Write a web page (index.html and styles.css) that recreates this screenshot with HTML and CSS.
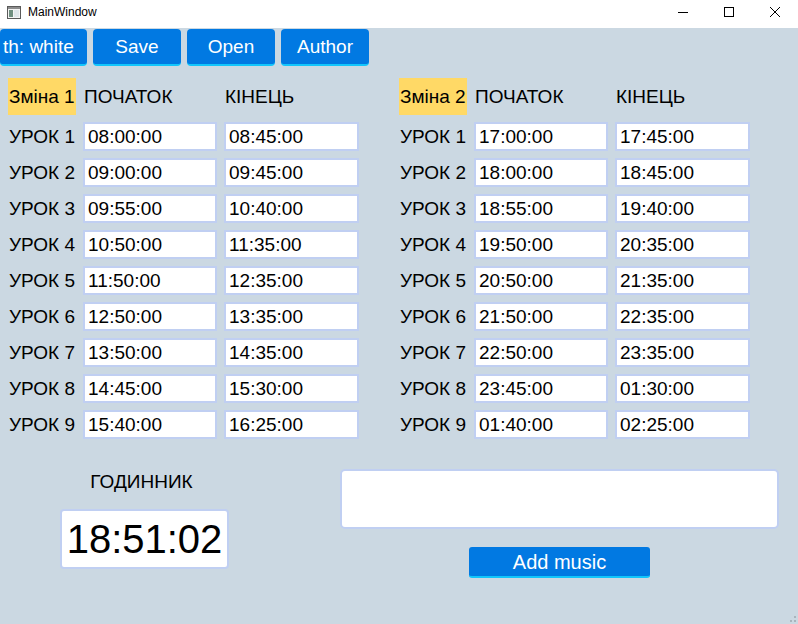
FILE: index.html
```html
<!DOCTYPE html>
<html lang="uk">
<head>
<meta charset="utf-8">
<title>MainWindow</title>
<link rel="stylesheet" href="styles.css">
</head>
<body>
<div class="titlebar">
  <svg class="appicon" width="14" height="13" viewBox="0 0 14 13">
    <rect x="0.5" y="0.5" width="13" height="12" fill="#f4f4f4" stroke="#5a5a5a"/>
    <rect x="1" y="1" width="12" height="2" fill="#8c8c8c"/>
    <rect x="2" y="4" width="4" height="7" fill="#6f8f80"/>
    <rect x="7" y="4" width="5" height="7" fill="#dfe6ea"/>
  </svg>
  <span class="title">MainWindow</span>
  <div class="controls">
    <span class="ctl"><svg width="12" height="12" viewBox="0 0 12 12"><path d="M1 6.5h10" stroke="#000" stroke-width="1"/></svg></span>
    <span class="ctl"><svg width="12" height="12" viewBox="0 0 12 12"><rect x="1.5" y="1.5" width="9" height="9" fill="none" stroke="#000" stroke-width="1"/></svg></span>
    <span class="ctl"><svg width="12" height="12" viewBox="0 0 12 12"><path d="M1 1L11 11M11 1L1 11" stroke="#000" stroke-width="1"/></svg></span>
  </div>
</div>
<main class="window">
  <div class="toolbar">
    <button class="btn first"><span>th: white</span></button>
    <button class="btn">Save</button>
    <button class="btn">Open</button>
    <button class="btn">Author</button>
  </div>

  <div class="tables">
    <div class="shift">
      <div class="shiftname">Зміна 1</div><div class="head">ПОЧАТОК</div><div class="head">КІНЕЦЬ</div>
      <div class="lbl">УРОК 1</div><div class="field">08:00:00</div><div class="field">08:45:00</div>
      <div class="lbl">УРОК 2</div><div class="field">09:00:00</div><div class="field">09:45:00</div>
      <div class="lbl">УРОК 3</div><div class="field">09:55:00</div><div class="field">10:40:00</div>
      <div class="lbl">УРОК 4</div><div class="field">10:50:00</div><div class="field">11:35:00</div>
      <div class="lbl">УРОК 5</div><div class="field">11:50:00</div><div class="field">12:35:00</div>
      <div class="lbl">УРОК 6</div><div class="field">12:50:00</div><div class="field">13:35:00</div>
      <div class="lbl">УРОК 7</div><div class="field">13:50:00</div><div class="field">14:35:00</div>
      <div class="lbl">УРОК 8</div><div class="field">14:45:00</div><div class="field">15:30:00</div>
      <div class="lbl">УРОК 9</div><div class="field">15:40:00</div><div class="field">16:25:00</div>
    </div>
    <div class="shift">
      <div class="shiftname">Зміна 2</div><div class="head">ПОЧАТОК</div><div class="head">КІНЕЦЬ</div>
      <div class="lbl">УРОК 1</div><div class="field">17:00:00</div><div class="field">17:45:00</div>
      <div class="lbl">УРОК 2</div><div class="field">18:00:00</div><div class="field">18:45:00</div>
      <div class="lbl">УРОК 3</div><div class="field">18:55:00</div><div class="field">19:40:00</div>
      <div class="lbl">УРОК 4</div><div class="field">19:50:00</div><div class="field">20:35:00</div>
      <div class="lbl">УРОК 5</div><div class="field">20:50:00</div><div class="field">21:35:00</div>
      <div class="lbl">УРОК 6</div><div class="field">21:50:00</div><div class="field">22:35:00</div>
      <div class="lbl">УРОК 7</div><div class="field">22:50:00</div><div class="field">23:35:00</div>
      <div class="lbl">УРОК 8</div><div class="field">23:45:00</div><div class="field">01:30:00</div>
      <div class="lbl">УРОК 9</div><div class="field">01:40:00</div><div class="field">02:25:00</div>
    </div>
  </div>

  <div class="bottom">
    <div class="clockcol">
      <div class="clocklabel">ГОДИННИК</div>
      <div class="clock">18:51:02</div>
    </div>
    <div class="musiccol">
      <div class="textbox"></div>
      <button class="btn music">Add music</button>
    </div>
  </div>
  <svg class="grip" width="6" height="6" viewBox="0 0 6 6">
    <rect x="4" y="0" width="2" height="2" fill="#a9b4bc"/>
    <rect x="0" y="4" width="2" height="2" fill="#a9b4bc"/>
    <rect x="4" y="4" width="2" height="2" fill="#a9b4bc"/>
  </svg>
</main>
</body>
</html>
```

FILE: styles.css
```css
* { box-sizing: border-box; }

html, body {
  margin: 0;
  padding: 0;
  width: 798px;
  height: 624px;
  overflow: hidden;
}

body {
  font-family: "Liberation Sans", Arial, sans-serif;
  color: #000;
  background: #cbd8e2;
}

.titlebar {
  height: 28px;
  background: #fff;
  display: flex;
  align-items: center;
  padding-left: 7px;
}

.appicon { display: block; margin-top: -4px; }

.title {
  font-family: "Liberation Sans", Arial, sans-serif;
  font-size: 12px;
  margin-left: 7px;
  margin-top: -4px;
}

.controls {
  margin-left: auto;
  display: flex;
  height: 28px;
}

.ctl {
  width: 46px;
  height: 28px;
  display: flex;
  align-items: center;
  justify-content: center;
  padding-bottom: 4px;
}

.ctl svg { display: block; }

.window {
  position: relative;
  height: 596px;
  background: #cbd8e2;
  padding-top: 1px;
}

.toolbar {
  display: flex;
  gap: 6px;
  height: 37px;
}

.btn {
  font-family: "Liberation Sans", Arial, sans-serif;
  font-size: 19px;
  color: #fff;
  background: #0179e2;
  border: none;
  border-bottom: 2px solid #12c6fb;
  border-radius: 4px;
  width: 88px;
  height: 37px;
  padding: 0;
  padding-top: 1px;
  display: flex;
  align-items: center;
  justify-content: center;
  white-space: nowrap;
}

.btn.first {
  width: 87px;
  justify-content: flex-start;
  padding-left: 3px;
  overflow: hidden;
}

.tables {
  display: flex;
  gap: 40px;
  padding-left: 8px;
  margin-top: 12px;
}

.shift {
  display: grid;
  grid-template-columns: 68px 134px 135px;
  grid-template-rows: 37px repeat(9, 29px);
  column-gap: 7px;
  row-gap: 7px;
  font-size: 19px;
}

.shift > .shiftname {
  background: #ffd966;
  display: flex;
  align-items: center;
  padding-left: 1px;
  white-space: nowrap;
}

.head {
  display: flex;
  align-items: center;
  padding-left: 1px;
}

.lbl {
  display: flex;
  align-items: center;
  padding-left: 1px;
  white-space: nowrap;
}

.field {
  background: #fff;
  border: 2px solid #c0cff2;
  display: flex;
  align-items: center;
  padding-left: 3px;
}

.bottom {
  display: flex;
  margin-top: 30px;
  padding-left: 60px;
}

.clockcol {
  width: 169px;
  display: flex;
  flex-direction: column;
  align-items: center;
}

.clocklabel {
  font-size: 19px;
  height: 24px;
  line-height: 24px;
  margin-top: 1px;
  margin-left: -6px;
}

.clock {
  margin-top: 15px;
  width: 169px;
  height: 60px;
  background: #fff;
  border: 2px solid #c0cff2;
  border-radius: 4px;
  font-size: 40px;
  display: flex;
  align-items: center;
  justify-content: center;
}

.musiccol {
  margin-left: 111px;
  width: 439px;
  display: flex;
  flex-direction: column;
  align-items: center;
}

.textbox {
  width: 439px;
  height: 60px;
  background: #fff;
  border: 2px solid #c0cff2;
  border-radius: 5px;
}

.btn.music {
  margin-top: 18px;
  width: 181px;
  height: 31px;
  font-size: 20px;
  border-radius: 3px;
}

.grip {
  position: absolute;
  right: 2px;
  bottom: 2px;
}
```
